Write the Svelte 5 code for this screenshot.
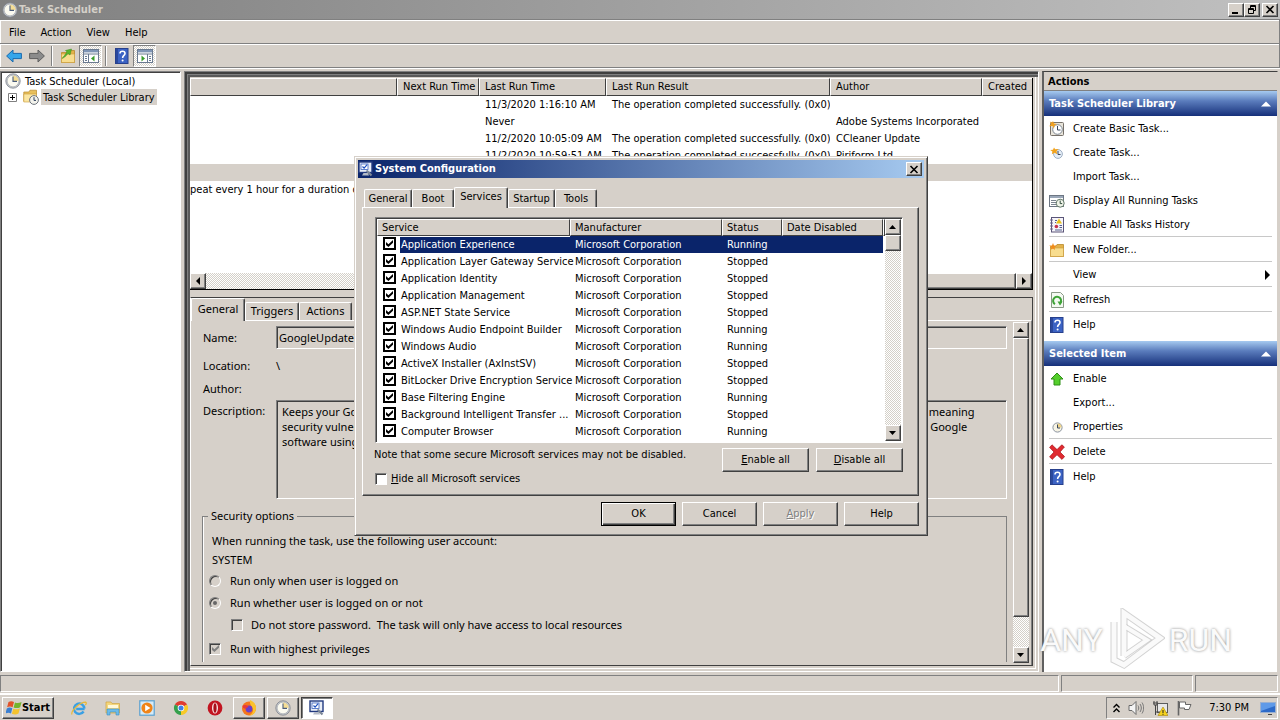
<script>
  const menus = ["File", "Action", "View", "Help"];

  const taskColumns = [
    { label: "", width: 207 },
    { label: "Next Run Time", width: 82 },
    { label: "Last Run Time", width: 127 },
    { label: "Last Run Result", width: 224 },
    { label: "Author", width: 152 },
    { label: "Created", width: 0 },
  ];

  const ok = "The operation completed successfully. (0x0)";
  const tasks = [
    ["", "", "11/3/2020 1:16:10 AM", ok, "", ""],
    ["", "", "Never", "", "Adobe Systems Incorporated", ""],
    ["", "", "11/2/2020 10:05:09 AM", ok, "CCleaner Update", ""],
    ["", "", "11/2/2020 10:59:51 AM", ok, "Piriform Ltd", ""],
    ["", "", "", "", "", ""],
    ["peat every 1 hour for a duration of 1 day.", "", "", "", "", ""],
  ];
  const selectedTask = 4;

  const taskTabs = [
    { label: "General", width: 54 },
    { label: "Triggers", width: 54 },
    { label: "Actions", width: 53 },
  ];

  const description =
    "Keeps your Google software up to date.  If this task is disabled or stopped,  your Google software will not be kept up to date,  meaning\n" +
    "security vulnerabilities that may arise cannot be fixed and features may not work.  This task uninstalls itself when there is  no  Google\n" +
    "software using it.";

  const actionGroups = [
    {
      title: "Task Scheduler Library",
      items: [
        { label: "Create Basic Task...", icon: "basic" },
        { label: "Create Task...", icon: "create" },
        { label: "Import Task..." },
        { label: "Display All Running Tasks", icon: "running" },
        { label: "Enable All Tasks History", icon: "history" },
        { label: "New Folder...", icon: "newfolder", line: true },
        { label: "View", line: true, submenu: true },
        { label: "Refresh", icon: "refresh", line: true },
        { label: "Help", icon: "help", line: true },
      ],
    },
    {
      title: "Selected Item",
      items: [
        { label: "Enable", icon: "enable" },
        { label: "Export..." },
        { label: "Properties", icon: "smallclock" },
        { label: "Delete", icon: "delete", line: true },
        { label: "Help", icon: "help", line: true },
      ],
    },
  ];

  const configTabs = [
    { label: "General", width: 48 },
    { label: "Boot", width: 42 },
    { label: "Services", width: 54 },
    { label: "Startup", width: 47 },
    { label: "Tools", width: 42 },
  ];
  let configTab = $state("Services");

  let services = $state([
    { name: "Application Experience", status: "Running", on: true },
    { name: "Application Layer Gateway Service", status: "Stopped", on: true },
    { name: "Application Identity", status: "Stopped", on: true },
    { name: "Application Management", status: "Stopped", on: true },
    { name: "ASP.NET State Service", status: "Stopped", on: true },
    { name: "Windows Audio Endpoint Builder", status: "Running", on: true },
    { name: "Windows Audio", status: "Running", on: true },
    { name: "ActiveX Installer (AxInstSV)", status: "Stopped", on: true },
    { name: "BitLocker Drive Encryption Service", status: "Stopped", on: true },
    { name: "Base Filtering Engine", status: "Running", on: true },
    { name: "Background Intelligent Transfer ...", status: "Stopped", on: true },
    { name: "Computer Browser", status: "Running", on: true },
    { name: "", status: "", on: true },
  ]);
  let selectedService = $state(0);

  function setAll(on) {
    for (const s of services) s.on = on;
  }
</script>

{#snippet icon(name)}
  <svg class="icon" width="16" height="16" viewBox="0 0 16 16" aria-hidden="true">
    {#if name === "clock"}
      <circle cx="8" cy="8" r="7.2" fill="#c6c9ce" stroke="#7d838c" stroke-width=".8" />
      <circle cx="8" cy="8" r="5.8" fill="#fbfaf0" stroke="#a2a7ae" stroke-width=".6" />
      <path d="M8 8V2.4A5.6 5.6 0 0 1 13.6 8z" fill="#f4dd95" />
      <path d="M8 3.5V8.4H12" fill="none" stroke="#4a5c7c" stroke-width="1.1" />
    {:else if name === "smallclock"}
      <circle cx="8.5" cy="8.5" r="4.6" fill="#f6f3e4" stroke="#8a93a0" />
      <path d="M8.5 8.5V4.5a4 4 0 0 1 4 4z" fill="#efd48a" />
      <path d="M8.5 5.5V9H11" fill="none" stroke="#39465c" />
    {:else if name === "basic"}
      <rect x="1.5" y="1.5" width="13" height="13" rx="1" fill="#e8e4da" stroke="#77716a" />
      <circle cx="8.5" cy="8.5" r="4.8" fill="#fff" stroke="#7d8792" />
      <path d="M8.5 5V9H11.5" fill="none" stroke="#39465c" />
      <path d="M4 0l1 2.6L8 3 5.4 4.4 5 7.5 3.4 5 .2 5.2 2 3 .8.4 3 1.6z" fill="#f0a020" />
    {:else if name === "create"}
      <circle cx="9" cy="9" r="4.4" fill="#e4edf7" stroke="#9fb0c4" />
      <path d="M9 6V9.5H11.5" fill="none" stroke="#39465c" />
      <path d="M5 2.5l1.2 1.8 3.3-.2L7.5 6.2l.8 3-2.8-1.4-2.7 1.4L3.4 6.5 1.2 5l2.8-.3z" fill="#f2a31c" />
    {:else if name === "running"}
      <rect x=".5" y="2.5" width="14" height="11" fill="#fff" stroke="#6d7683" />
      <path d="M1 4h13" stroke="#9aa7b8" stroke-width="2" />
      <path d="M2 7.5h5M2 9.5h5M2 11.5h5" stroke="#7c858f" />
      <circle cx="11.2" cy="10.2" r="4" fill="#f1f5ea" stroke="#5f7566" />
      <path d="M11.2 7.6v3h2" fill="none" stroke="#2f4a3a" />
    {:else if name === "history"}
      <rect x="2.5" y=".5" width="12" height="14.5" fill="#f6f4fa" stroke="#5a5578" />
      <path d="M1 3h3M1 6h3M1 9h3M1 12h3" stroke="#6a6488" />
      <path d="M10 1.5l3 5H7z" fill="#e8c21c" />
      <path d="M6 3.5h2M6 5.5h1" stroke="#55608c" />
      <circle cx="7.4" cy="9.5" r="1.8" fill="#c8324a" />
      <path d="M10.5 8.5H13M10.5 10.5H13M6 13h7" stroke="#55608c" />
    {:else if name === "folderup" || name === "newfolder"}
      <path d="M1.5 4.5h5l1.5-2h6.5v12h-13z" fill="#e3b24a" stroke="#b98a2b" stroke-width=".8" />
      <path d="M1.5 6h13v8.5h-13z" fill="#f8dd8e" stroke="#c99b3a" stroke-width=".6" />
      {#if name === "folderup"}
        <path d="M2 10.5C4.5 9.5 6.5 7.5 8 5.5L10 7l1.5-6L5.5 2.500 7 3.8C5.5 6 4 8.5 2 10.5z" fill="#57b52d" stroke="#3a8a1b" stroke-width=".5" />
      {:else}
        <path d="M4 1l1 2.4 2.8.2L5.6 5.3 6 8 4 6.4 1.6 7.8 2.4 5.2.2 3.6 3 3.4z" fill="#f08c1a" />
      {/if}
    {:else if name === "library"}
      <path d="M.8 3h5l1.2-1.8h6.5v11H.8z" fill="#e8c05c" stroke="#b98a2b" stroke-width=".7" />
      <path d="M.8 5h12.7v8H.8z" fill="#fbe6a2" stroke="#c99b3a" stroke-width=".6" />
      <circle cx="11" cy="11" r="4.4" fill="#f3f3ec" stroke="#6f757e" />
      <path d="M11 8.2v3.2h2" fill="none" stroke="#2d3e5c" />
    {:else if name === "refresh"}
      <path d="M2.5.5h9l3 3v12h-12z" fill="#f4f9f2" stroke="#8a9a86" />
      <path d="M6 12.2A4 4 0 1 1 10.5 12" fill="none" stroke="#3da336" stroke-width="2" />
      <path d="M8.5 9.5h5l-2.5 4z" fill="#3da336" />
    {:else if name === "help"}
      <rect x="1.5" y=".5" width="12.5" height="15" fill="#3c63c4" stroke="#27408c" />
      <path d="M2 1h2v14H2z" fill="#2a489c" />
      <path d="M6 5.4C6 2.6 11 2.6 11 5.4 11 7.4 8.6 7.4 8.6 10" fill="none" stroke="#fff" stroke-width="1.6" />
      <circle cx="8.6" cy="12.4" r="1" fill="#fff" />
    {:else if name === "enable"}
      <path d="M8 2l6 6h-3v6H5V8H2z" fill="#55cf2c" stroke="#2f8f17" />
    {:else if name === "delete"}
      <path d="M3 .8L8 5.6 12.8.8 15.4 3 11 8l4.6 4.6-2.6 2.8L8 10.8 3.2 15.4.6 12.8 5 8 .6 3.4z" fill="#e02a30" stroke="#a81218" stroke-width=".7" />
    {:else if name === "back"}
      <path d="M.6 8L7 2v3.4h8.4v5.2H7V14z" fill="#35a6ea" stroke="#1a6aae" />
    {:else if name === "forward"}
      <path d="M15.4 8L9 2v3.4H.6v5.2H9V14z" fill="#8b8b8b" stroke="#5e5e5e" />
    {:else if name === "treepane" || name === "actionpane"}
      <rect x=".5" y="1.5" width="15" height="13" fill="#fff" stroke="#6a7a90" />
      <path d="M1 3.2h14" stroke="#7f95b5" stroke-width="2.4" />
      <path d="M1 6h14" stroke="#6a7a90" />
      {#if name === "treepane"}
        <path d="M5.5 6v8.5" stroke="#6a7a90" />
        <path d="M2 8.5h2M2 10.5h2M2 12.5h2" stroke="#6a7a90" />
        <path d="M11.5 7.5v6L8 10.5z" fill="#3a9c2c" />
      {:else}
        <path d="M10.5 6v8.5" stroke="#6a7a90" />
        <path d="M12 8.5h2M12 10.5h2M12 12.5h2" stroke="#6a7a90" />
        <path d="M4.5 7.5v6L8 10.5z" fill="#3a9c2c" />
      {/if}
    {:else if name === "config"}
      <rect x="1" y="1" width="13" height="10.5" fill="#e8edf6" stroke="#223a80" stroke-width="1.4" />
      <rect x="3" y="3" width="7" height="5.5" fill="#fff" stroke="#3a62c0" stroke-width=".8" />
      <path d="M4.5 5.5l1.6 1.6 3-3.4" fill="none" stroke="#1c4fc0" stroke-width="1.2" />
      <path d="M4 14.5h7l-1-2.5H5.5z" fill="#b4bac6" />
      <path d="M8.5 9.5l5 5" stroke="#7c8798" stroke-width="2.2" />
    {:else if name === "ie"}
      <path d="M13.6 9H5.2M13.4 8.6A5.2 5.2 0 1 0 12.6 11.5" fill="none" stroke="#3aa0e4" stroke-width="2.4" />
      <path d="M1 14.5C-.5 11 9 2 14.8 2.2c1 .5.4 2-.6 3" fill="none" stroke="#e8b93a" stroke-width="1.2" />
    {:else if name === "explorer"}
      <path d="M1 2h5l1 1.5h7.5V13H1z" fill="#f3d67c" stroke="#d0a540" stroke-width=".7" />
      <path d="M3 5h10v3H3z" fill="#fff8d8" />
      <path d="M2 9h12v6h-3v-3H5v3H2z" fill="#6cbbe8" stroke="#3b8ec4" stroke-width=".6" />
    {:else if name === "media"}
      <rect x=".8" y=".8" width="14.4" height="14.4" fill="#d6ebf8" stroke="#5aa0d0" stroke-width="1.2" />
      <circle cx="8" cy="8" r="5.6" fill="#f08418" />
      <path d="M6.2 4.8v6.4L11.4 8z" fill="#fff" />
    {:else if name === "chrome"}
      <path d="M8 8L1.9 4.5A7 7 0 0 1 14.1 4.5z" fill="#e03c31" />
      <path d="M8 8L14.1 4.5A7 7 0 0 1 8 15z" fill="#f7c927" />
      <path d="M8 8V15A7 7 0 0 1 1.9 4.5z" fill="#35a04c" />
      <circle cx="8" cy="8" r="3.3" fill="#fff" />
      <circle cx="8" cy="8" r="2.5" fill="#3f7fe8" />
    {:else if name === "opera"}
      <circle cx="8" cy="8" r="7.4" fill="#c21420" />
      <ellipse cx="8" cy="8" rx="3" ry="5.6" fill="#fbe6e6" />
      <ellipse cx="8" cy="8" rx="1.6" ry="4.8" fill="#a80f1a" />
    {:else if name === "firefox"}
      <circle cx="8" cy="8.5" r="7" fill="#f5761c" />
      <path d="M9 0c4 1.5 6.5 5 6 9a7 7 0 0 1-7 6.5c4-1.5 5-5.5 3-8.5C9.5 5 8.5 3 9 0z" fill="#fbc22c" />
      <circle cx="8" cy="9" r="3.4" fill="#6b3fc8" />
      <path d="M1.5 6C3 4.5 6 5 7.5 6.5L5 8.5C4 9 2 8.5 1.5 6z" fill="#e83a3c" />
    {:else if name === "windows"}
      <path d="M2.5 2C4.5.8 6.3 1 8 2L6.6 7.2C5 6.2 3 6.2 1.1 7.2z" fill="#e2532a" />
      <path d="M9 2.4C11 3.4 13 3.2 15.6 1.9L14.2 7.2C12 8.3 9.6 8.3 7.6 7.4z" fill="#74b52e" />
      <path d="M.8 8.4C2.7 7.2 4.6 7.3 6.3 8.3L5 13.4C3.3 12.4 1.3 12.4-.6 13.6z" fill="#3a7fd2" />
      <path d="M7.3 8.7C9.4 9.6 11.5 9.5 13.9 8.4L12.5 13.6C10.3 14.7 8 14.7 5.9 13.7z" fill="#f4c22c" />
    {:else if name === "speaker"}
      <path d="M1 5.5h3L8 1.5v13L4 10.5H1z" fill="#f4f4f4" stroke="#6a6a6a" />
      <path d="M10 5.5c1 1.5 1 3.5 0 5M12 4c1.8 2.5 1.8 5.5 0 8M14 2.5c2.2 3.5 2.2 7.5 0 11" fill="none" stroke="#777" />
    {:else if name === "network"}
      <rect x="5.5" y="3.5" width="10" height="9" fill="#e8e8e8" stroke="#5c5c5c" />
      <path d="M2 1v4h3V1M3.5 5v10M1 3h5M3.5 12h5" fill="none" stroke="#444" />
      <path d="M11 7l5 8.5H6z" fill="#f6d21c" stroke="#a8860a" stroke-width=".6" />
      <path d="M11 10v3M11 13.8v1" stroke="#222" />
    {:else if name === "flag"}
      <path d="M2.5 1v14.5" stroke="#666" stroke-width="1.6" />
      <path d="M3.5 2h6v2.5h5.5L13 9.5H8.5V8h-5z" fill="#fff" stroke="#666" />
    {:else if name === "desktop"}
      <rect x=".5" y="2.5" width="15" height="10" fill="#2d6ac8" stroke="#9ab0d0" />
      <path d="M1 3h14v3L1 11z" fill="#5f9ae8" />
      <path d="M8 14.5h4" stroke="#444" />
    {/if}
  </svg>
{/snippet}

{#snippet arrow(dir)}
  <svg class="arrow" width="8" height="8" viewBox="0 0 8 8" aria-hidden="true">
    {#if dir === "up"}<path d="M0 6h7L3.5 2z" />
    {:else if dir === "down"}<path d="M0 2h7L3.5 6z" />
    {:else if dir === "left"}<path d="M6 0v8L2 4z" />
    {:else}<path d="M2 0v8l4-4z" />{/if}
  </svg>
{/snippet}

{#snippet cross()}
  <svg width="10" height="9"><path d="M1.5 1l7 7M8.5 1l-7 7" stroke="#000" stroke-width="1.6" /></svg>
{/snippet}

<div class="desktop">
  <div class="window">
    <header class="titlebar inactive">
      {@render icon("clock")}
      <h1>Task Scheduler</h1>
      <button class="sys" aria-label="Minimize"><svg width="10" height="9"><path d="M1 8h6" stroke="#000" stroke-width="2" /></svg></button>
      <button class="sys" aria-label="Restore"><svg width="10" height="9"><path d="M3.5 3V.5h5v5H6.5M3.5 1.5h5M1.5 3.5h5v5h-5zM1.5 4.5h5" fill="none" stroke="#000" /></svg></button>
      <button class="sys close" aria-label="Close">{@render cross()}</button>
    </header>

    <nav class="menubar">
      {#each menus as m}
        <button>{m}</button>
      {/each}
    </nav>

    <div class="toolbar">
      <button aria-label="Back">{@render icon("back")}</button>
      <button aria-label="Forward">{@render icon("forward")}</button>
      <span class="sep"></span>
      <button aria-label="Up">{@render icon("folderup")}</button>
      <button class="pressed" aria-label="Console tree">{@render icon("treepane")}</button>
      <span class="sep"></span>
      <button aria-label="Help">{@render icon("help")}</button>
      <button class="pressed" aria-label="Action pane">{@render icon("actionpane")}</button>
    </div>

    <main class="panes">
      <aside class="tree">
        <div class="node">{@render icon("clock")}<span>Task Scheduler (Local)</span></div>
        <div class="node child">
          <button class="expand" aria-label="Expand"><svg width="9" height="9"><path d="M.5.5h8v8h-8z" fill="#fff" stroke="#808080" /><path d="M2 4.5h5M4.5 2v5" stroke="#000" /></svg></button>
          {@render icon("library")}<span class="current">Task Scheduler Library</span>
        </div>
      </aside>

      <section class="center">
        <div class="tasklist">
          <table>
            <colgroup>
              {#each taskColumns as c}
                <col style:width={c.width ? `${c.width}px` : null} />
              {/each}
            </colgroup>
            <thead>
              <tr>{#each taskColumns as c}<th>{c.label}</th>{/each}</tr>
            </thead>
            <tbody>
              {#each tasks as row, i}
                <tr class:picked={i === selectedTask}>
                  {#each row as cell}<td>{cell}</td>{/each}
                </tr>
              {/each}
            </tbody>
          </table>
          <div class="scroll horizontal">
            <button aria-label="Scroll left">{@render arrow("left")}</button>
            <div class="track"></div>
            <div class="thumb"></div>
            <button aria-label="Scroll right">{@render arrow("right")}</button>
          </div>
        </div>

        <div class="details">
          <div class="tabs" role="tablist">
            {#each taskTabs as t, i}
              <button role="tab" class:active={i === 0} aria-selected={i === 0} style:width="{t.width}px">{t.label}</button>
            {/each}
          </div>
          <div class="page">
            <div class="form">
              <div class="fields">
                <label for="name">Name:</label>
                <input id="name" class="sunken" value="GoogleUpdateTaskMachineUA" readonly />
                <span>Location:</span><span>\</span>
                <span>Author:</span><span></span>
                <label for="desc" class="top">Description:</label>
                <textarea id="desc" class="sunken" readonly value={description}></textarea>
              </div>
              <fieldset>
                <legend>Security options</legend>
                <p>When running the task, use the following user account:</p>
                <p class="account">SYSTEM</p>
                <label><input type="radio" name="logon" disabled />Run only when user is logged on</label>
                <label><input type="radio" name="logon" checked disabled />Run whether user is logged on or not</label>
                <label class="sub"><input type="checkbox" disabled />Do not store password.&nbsp; The task will only have access to local resources</label>
                <label class="last"><input type="checkbox" checked disabled />Run with highest privileges</label>
              </fieldset>
            </div>
            <div class="scroll vertical">
              <button aria-label="Scroll up">{@render arrow("up")}</button>
              <div class="thumb long"></div>
              <div class="track"></div>
              <button aria-label="Scroll down">{@render arrow("down")}</button>
            </div>
          </div>
        </div>
      </section>

      <aside class="actions">
        <h2>Actions</h2>
        {#each actionGroups as g}
          <section>
            <h3>{g.title}<svg width="10" height="6"><path d="M0 5.5h10L5 .5z" fill="#fff" /></svg></h3>
            {#each g.items as item}
              <button class:line={item.line}>
                <span class="slot">{#if item.icon}{@render icon(item.icon)}{/if}</span>
                {item.label}
                {#if item.submenu}<svg class="more" width="5" height="10"><path d="M0 0v10l5-5z" /></svg>{/if}
              </button>
            {/each}
          </section>
        {/each}
      </aside>
    </main>

    <footer class="status"><div></div><div></div><div></div></footer>
  </div>

  <footer class="taskbar">
    <button class="start">{@render icon("windows")}Start</button>
    <div class="quick">
      {#each ["ie", "explorer", "media", "chrome", "opera"] as app}
        <button aria-label={app}>{@render icon(app)}</button>
      {/each}
    </div>
    <div class="running">
      <button aria-label="Firefox">{@render icon("firefox")}</button>
      <button aria-label="Task Scheduler">{@render icon("clock")}</button>
      <button class="pressed" aria-label="System Configuration">{@render icon("config")}</button>
    </div>
    <div class="tray">
      <svg width="7" height="10"><path d="M.5 4.5l3-3 3 3M.5 9l3-3 3 3" fill="none" stroke="#000" stroke-width="1.4" /></svg>
      {@render icon("speaker")}
      {@render icon("network")}
      {@render icon("flag")}
      <time>7:30 PM</time>
      {@render icon("desktop")}
    </div>
  </footer>

  <div class="dialog" role="dialog" aria-labelledby="config-title">
    <header class="titlebar">
      {@render icon("config")}
      <h1 id="config-title">System Configuration</h1>
      <button class="sys close" aria-label="Close">{@render cross()}</button>
    </header>

    <div class="dialog-body">
      <div class="tabs" role="tablist">
        {#each configTabs as t}
          <button
            role="tab"
            class:active={configTab === t.label}
            aria-selected={configTab === t.label}
            style:width="{t.width}px"
            onclick={() => (configTab = t.label)}
          >{t.label}</button>
        {/each}
      </div>

      <div class="sheet">
        <div class="listview sunken">
          <div class="rows">
            <table>
              <colgroup><col class="c-service" /><col class="c-maker" /><col class="c-status" /><col class="c-date" /><col /></colgroup>
              <thead>
                <tr><th>Service</th><th>Manufacturer</th><th>Status</th><th>Date Disabled</th><th></th></tr>
              </thead>
              <tbody>
                {#each services as s, i}
                  <tr class:selected={i === selectedService} onclick={() => (selectedService = i)}>
                    <td class="svc"><label><input type="checkbox" bind:checked={s.on} /><span>{s.name}</span></label></td>
                    <td>{s.name ? "Microsoft Corporation" : ""}</td>
                    <td>{s.status}</td>
                    <td></td>
                    <td class="filler"></td>
                  </tr>
                {/each}
              </tbody>
            </table>
          </div>
          <div class="scroll vertical">
            <button aria-label="Scroll up">{@render arrow("up")}</button>
            <div class="thumb"></div>
            <div class="track"></div>
            <button aria-label="Scroll down">{@render arrow("down")}</button>
          </div>
        </div>

        <div class="under">
          <div class="notes">
            <p>Note that some secure Microsoft services may not be disabled.</p>
            <label><input type="checkbox" /><span><u>H</u>ide all Microsoft services</span></label>
          </div>
          <button class="push wide" onclick={() => setAll(true)}><span><u>E</u>nable all</span></button>
          <button class="push wide" onclick={() => setAll(false)}><span><u>D</u>isable all</span></button>
        </div>
      </div>

      <div class="buttons">
        <button class="push default">OK</button>
        <button class="push">Cancel</button>
        <button class="push" disabled><span><u>A</u>pply</span></button>
        <button class="push">Help</button>
      </div>
    </div>
  </div>

  <div class="watermark" aria-hidden="true">
    <span>ANY</span>
    <svg width="58" height="64" viewBox="0 0 58 64">
      <g fill="none">
        <path d="M17 48V5L53 30 17 57 7 52V14" stroke="#a8a8a8" stroke-width="7" opacity=".5" />
        <path d="M17 18L40 32 17 48" stroke="#a8a8a8" stroke-width="6" opacity=".5" />
        <path d="M17 48V5L53 30 17 57 7 52V14" stroke="#fafafa" stroke-width="5" />
        <path d="M17 18L40 32 17 48" stroke="#fafafa" stroke-width="4" />
      </g>
    </svg>
    <span>RUN</span>
  </div>
</div>

<style>
  :global(body) {
    margin: 0;
    background: #d4d0c8;
  }
  * {
    box-sizing: border-box;
  }
  .desktop {
    --face: #d6d0c9;
    --shade: #808080;
    --dark: #404040;
    position: relative;
    display: flex;
    flex-direction: column;
    min-height: 100vh;
    overflow: hidden;
    background: var(--face);
    color: #000;
    font: 11px/14px "DejaVu Sans Condensed", "Noto Sans", sans-serif;
    white-space: nowrap;
  }
  button, input, textarea {
    font: inherit;
    color: inherit;
    margin: 0;
  }
  button {
    background: none;
    border: 0;
    padding: 0;
  }
  h1, h2, h3, p {
    margin: 0;
    font-size: 11px;
    line-height: 14px;
  }
  .icon, .arrow {
    display: block;
    flex: none;
  }
  .sunken {
    border: 1px solid;
    border-color: var(--shade) #fff #fff var(--shade);
    box-shadow: inset 1px 1px var(--dark);
  }

  /* Window frame */
  .window {
    flex: 1;
    display: flex;
    flex-direction: column;
  }
  .titlebar {
    display: flex;
    align-items: center;
    height: 18px;
    padding-right: 2px;
    background: linear-gradient(90deg, #0a246a, #a6caf0);
    color: #fff;
  }
  .titlebar h1 {
    flex: 1;
    padding-left: 1px;
  }
  .titlebar.inactive {
    height: 19px;
    padding-left: 2px;
    background: linear-gradient(90deg, #808080, #c0c0c0);
    color: #d4d0c8;
  }
  .sys {
    display: flex;
    align-items: center;
    justify-content: center;
    width: 16px;
    height: 14px;
    background: var(--face);
    border: 1px solid;
    border-color: #fff var(--dark) var(--dark) #fff;
    box-shadow: inset -1px -1px var(--shade);
  }
  .sys.close {
    margin-left: 2px;
  }
  .menubar {
    display: flex;
    height: 25px;
    padding: 2px 0 0 4px;
    border: 1px solid var(--shade);
    border-width: 1px 1px 1px 0;
    box-shadow: inset 1px 1px #fff;
  }
  .menubar button {
    padding: 0 10px 0 5px;
  }
  .toolbar {
    display: flex;
    align-items: center;
    height: 24px;
    padding-left: 2px;
    border: 1px solid var(--shade);
    border-width: 0 1px 1px 0;
    box-shadow: inset 1px 1px #fff, 0 1px #fff;
  }
  .toolbar button {
    display: flex;
    align-items: center;
    justify-content: center;
    width: 23px;
    height: 22px;
  }
  .pressed {
    background: #fff;
    border: 1px solid;
    border-color: var(--shade) #fff #fff var(--shade);
  }
  .toolbar .pressed {
    background: repeating-conic-gradient(#fff 0 25%, #d4d0c8 0 50%) 0 0 / 2px 2px;
  }
  .sep {
    width: 2px;
    height: 20px;
    margin: 0 3px;
    border-left: 1px solid var(--shade);
    border-right: 1px solid #fff;
  }

  .panes {
    flex: 1;
    display: grid;
    grid-template-columns: 181px minmax(0, 1fr) 238px;
    gap: 3px;
    margin-top: 3px;
  }
  .tree {
    padding-top: 1px;
    background: #fff;
    border: 1px solid;
    border-color: var(--shade) #fff #fff var(--shade);
    box-shadow: inset 1px 1px var(--dark);
  }
  .node {
    display: flex;
    align-items: center;
    height: 16px;
    padding-left: 4px;
  }
  .node span {
    height: 16px;
    line-height: 17px;
    padding: 0 2px;
    margin-left: 2px;
  }
  .child {
    padding-left: 7px;
  }
  .current {
    background: var(--face);
  }
  .expand {
    display: flex;
    margin-right: 6px;
  }

  /* Task list */
  .center {
    display: flex;
    flex-direction: column;
    gap: 7px;
    padding: 6px 5px 5px;
    border: 1px solid;
    border-color: var(--shade) #fff #fff var(--shade);
    box-shadow: inset 2px 2px var(--dark), inset 3px 3px var(--shade), inset 5px 5px #5a5a5a, inset -2px -2px var(--face), inset -3px -3px #fff;
    min-width: 0;
  }
  .tasklist {
    display: flex;
    flex-direction: column;
    height: 212px;
    background: #fff;
    border-right: 1px solid #000;
    border-bottom: 1px solid #000;
  }
  table {
    width: 100%;
    table-layout: fixed;
    border-collapse: separate;
    border-spacing: 0;
  }
  th, td {
    height: 17px;
    padding: 0 0 0 6px;
    overflow: hidden;
    font-weight: 400;
    text-align: left;
  }
  th {
    height: 18px;
    background: var(--face);
    border: 1px solid;
    border-color: #fff var(--dark) var(--dark) #fff;
    padding-left: 5px;
  }
  .tasklist th:last-child {
    border-right: 0;
  }
  .tasklist td:first-child {
    padding-left: 0;
  }
  .picked td {
    background: var(--face);
  }
  .scroll {
    display: flex;
    flex: none;
  }
  .horizontal {
    height: 16px;
    margin-top: auto;
  }
  .vertical {
    flex-direction: column;
    width: 16px;
  }
  .scroll button, .thumb {
    display: flex;
    align-items: center;
    justify-content: center;
    flex: none;
    width: 16px;
    height: 16px;
    background: var(--face);
    border: 1px solid;
    border-color: #fff var(--dark) var(--dark) #fff;
    box-shadow: inset -1px -1px var(--shade);
  }
  .horizontal .thumb {
    width: 480px;
  }
  .thumb.long {
    height: 279px;
  }
  .track {
    flex: 1;
    background: repeating-conic-gradient(#fff 0 25%, #d4d0c8 0 50%) 0 0 / 2px 2px;
  }

  /* Tabs */
  .tabs {
    display: flex;
    align-items: flex-end;
    height: 20px;
    padding-left: 2px;
  }
  .tabs button {
    height: 18px;
    border: 1px solid;
    border-color: #fff var(--dark) transparent #fff;
    border-bottom: 0;
    border-radius: 2px 2px 0 0;
    box-shadow: inset -1px 0 var(--shade);
  }
  .tabs .active {
    position: relative;
    height: 21px;
    margin-bottom: -1px;
    padding-bottom: 3px;
    background: var(--face);
  }

  /* Details */
  .details {
    flex: 1;
    display: flex;
    flex-direction: column;
    border: 1px solid;
    border-color: var(--dark) var(--dark) var(--dark) #fff;
    font-family: "Noto Sans", sans-serif;
  }
  .details .tabs {
    height: 22px;
    padding-left: 0;
  }
  .details .tabs button {
    padding-bottom: 1px;
  }
  .details .tabs .active {
    height: 23px;
    padding-bottom: 3px;
  }
  .page {
    flex: 1;
    display: flex;
    padding: 1px 2px 2px 0;
    border-top: 1px solid #fff;
    border-right: 1px solid var(--shade);
  }
  .form {
    flex: 1;
    padding: 4px 6px 0 11px;
    min-width: 0;
  }
  .fields {
    display: grid;
    grid-template-columns: 74px minmax(0, 1fr);
    grid-template-rows: 23px 34px 12px 104px;
    align-items: center;
  }
  .fields > label, .fields > span:nth-of-type(odd) {
    padding-left: 1px;
  }
  .fields .top {
    align-self: start;
    padding-top: 9px;
  }
  .fields input, textarea {
    display: block;
    width: 100%;
    height: 100%;
    padding: 0 2px;
    background: var(--face);
    border-radius: 0;
    outline: none;
  }
  .fields textarea {
    align-self: end;
    height: 99px;
    padding: 3px 5px;
    line-height: 15px;
    resize: none;
    overflow: hidden;
    white-space: pre;
  }
  fieldset {
    margin: 10px 0 0;
    padding: 0 9px;
    border: 1px solid var(--shade);
    border-bottom: 0;
    box-shadow: inset 1px 0 #fff;
    min-width: 0;
  }
  legend {
    margin-left: -4px;
    padding: 0 3px;
    height: 14px;
  }
  fieldset p {
    padding-top: 11px;
  }
  fieldset .account {
    padding: 5px 0 3px;
  }
  fieldset label {
    display: flex;
    align-items: center;
    height: 22px;
    gap: 9px;
    margin-left: -3px;
  }
  fieldset .sub {
    gap: 8px;
    padding-left: 22px;
  }
  fieldset .last {
    height: 26px;
  }

  input[type="checkbox"], input[type="radio"] {
    appearance: none;
    position: relative;
    flex: none;
    width: 12px;
    height: 12px;
    background: #fff;
    border: 1px solid;
    border-color: var(--shade) #fff #fff var(--shade);
    box-shadow: inset 1px 1px var(--dark);
  }
  input[type="checkbox"]:disabled, input[type="radio"]:disabled {
    background: var(--face);
  }
  input[type="radio"] {
    border-radius: 50%;
  }
  input[type="checkbox"]:checked::before {
    content: "";
    position: absolute;
    left: 2px;
    top: 1px;
    width: 7px;
    height: 7px;
    background: #000;
    clip-path: polygon(0 30%, 35% 60%, 100% 0, 100% 40%, 35% 100%, 0 70%);
  }
  input[type="checkbox"]:disabled:checked::before {
    background: var(--shade);
  }
  input[type="radio"]:checked::before {
    content: "";
    position: absolute;
    inset: 3px;
    border-radius: 50%;
    background: #666;
  }

  /* Actions pane */
  .actions {
    margin-right: 2px;
    background: #fff;
    border-left: 2px solid #606060;
    border-top: 1px solid var(--dark);
    border-right: 1px solid var(--face);
  }
  .actions h2 {
    height: 19px;
    padding: 3px 0 0 4px;
    background: var(--face);
    border-bottom: 1px solid var(--shade);
  }
  .actions h3 {
    display: flex;
    align-items: center;
    justify-content: space-between;
    height: 25px;
    padding: 1px 6px 0 5px;
    background: linear-gradient(#a6caf0, #5a7cbc 40%, #16307a);
    color: #fff;
  }
  .actions section + section {
    margin-top: 5px;
  }
  .actions button {
    display: flex;
    align-items: center;
    width: 100%;
    height: 24px;
    padding: 1px 7px 0 5px;
  }
  .actions .line {
    height: 25px;
    padding-top: 2px;
    background: linear-gradient(#c8c8c8, #c8c8c8) 5px 0 / calc(100% - 10px) 1px no-repeat;
  }
  .slot {
    width: 24px;
  }
  .more {
    margin-left: auto;
  }

  /* Status bar */
  .status {
    display: grid;
    grid-template-columns: 1fr 132px 83px;
    gap: 2px;
    height: 22px;
    padding: 3px 2px 1px 0;
    border-bottom: 1px solid #fff;
  }
  .status div {
    border: 1px solid;
    border-color: var(--shade) #fff #fff var(--shade);
  }

  /* Taskbar */
  .taskbar {
    display: flex;
    align-items: center;
    height: 26px;
    padding: 0 2px;
    border-top: 1px solid #fff;
  }
  .start, .running button {
    display: flex;
    align-items: center;
    justify-content: center;
    height: 22px;
    border: 1px solid;
    border-color: #fff var(--dark) var(--dark) #fff;
    box-shadow: inset -1px -1px var(--shade);
  }
  .start {
    width: 52px;
    font-weight: 700;
  }
  .quick {
    display: flex;
    gap: 18px;
    margin-left: 17px;
  }
  .running {
    display: flex;
    gap: 2px;
    margin-left: 10px;
  }
  .running button {
    width: 32px;
  }
  .running .pressed {
    border-color: var(--dark) #fff #fff var(--dark);
    box-shadow: inset 1px 1px var(--shade);
  }
  .tray {
    display: flex;
    align-items: center;
    gap: 8px;
    height: 22px;
    margin-left: auto;
    padding: 0 1px 0 6px;
    border: 1px solid;
    border-color: var(--shade) #fff #fff var(--shade);
  }
  time {
    padding: 0 3px 0 9px;
  }

  /* System Configuration */
  .dialog {
    position: absolute;
    left: 354px;
    top: 156px;
    width: 574px;
    padding: 3px;
    background: var(--face);
    border: 1px solid;
    border-color: var(--face) var(--dark) var(--dark) var(--face);
    box-shadow: inset 1px 1px #fff, inset -1px -1px var(--shade);
  }
  .dialog-body {
    padding: 9px 5px 6px 4px;
  }
  .sheet {
    height: 289px;
    padding: 9px 15px 0 12px;
    border: 1px solid;
    border-color: #fff var(--dark) var(--dark) #fff;
    box-shadow: inset -1px -1px var(--shade);
  }
  .listview {
    display: flex;
    height: 226px;
    padding: 1px;
    background: #fff;
  }
  .rows {
    flex: 1;
    overflow: hidden;
  }
  .listview th {
    height: 17px;
  }
  .listview th {
    padding-left: 4px;
  }
  .listview td {
    padding-left: 5px;
  }
  .c-service { width: 193px; }
  .c-maker { width: 152px; }
  .c-status { width: 60px; }
  .c-date { width: 101px; }
  .listview .svc {
    padding-left: 6px;
    overflow: visible;
  }
  .svc label {
    display: flex;
    align-items: flex-start;
    gap: 4px;
    height: 17px;
    padding-top: 1px;
  }
  .svc span {
    flex: 1;
    min-width: 0;
    height: 16px;
    line-height: 15px;
    padding-left: 1px;
  }
  .svc input[type="checkbox"] {
    width: 13px;
    height: 13px;
    border: 2px solid #000;
    box-shadow: none;
  }
  .svc input[type="checkbox"]:checked::before {
    left: 1px;
  }
  .selected td:not(.svc, .filler), .selected .svc span {
    background: #0a246a;
    color: #fff;
  }
  .under {
    display: flex;
    gap: 7px;
    padding-top: 5px;
  }
  .notes {
    flex: 1;
    margin-left: -1px;
  }
  .notes p {
    margin-bottom: 10px;
  }
  .notes label {
    display: flex;
    align-items: center;
    gap: 4px;
    padding-left: 1px;
  }
  .push {
    width: 75px;
    height: 24px;
    border: 1px solid;
    border-color: #fff var(--dark) var(--dark) #fff;
    box-shadow: inset -1px -1px var(--shade);
  }
  .wide {
    width: 87px;
  }
  .default {
    border-color: #000;
    box-shadow: inset 1px 1px #fff, inset -1px -1px var(--dark), inset -2px -2px var(--shade);
  }
  .push:disabled {
    color: var(--shade);
    text-shadow: 1px 1px #fff;
  }
  .buttons {
    display: flex;
    justify-content: flex-end;
    gap: 6px;
    padding-top: 6px;
  }

  .watermark {
    position: absolute;
    right: 48px;
    bottom: 48px;
    display: flex;
    align-items: center;
    gap: 4px;
    pointer-events: none;
    font: 32px/40px Roboto, sans-serif;
    color: #fafafa;
    text-shadow: 0 0 3px #888;
  }
</style>
